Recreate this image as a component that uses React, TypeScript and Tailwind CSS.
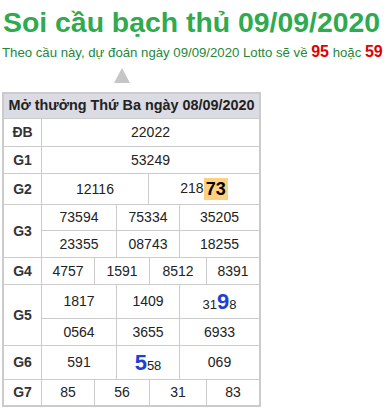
// Soi cau bach thu: prediction header + last draw result table

const W2 = ["w-[106px]", "w-[111px]"];
const W3 = ["w-[74px]", "w-[63px]", "w-[80px]"];
const W4 = ["w-[52px]", "w-[55px]", "w-[57px]", "w-[53px]"];

function Label({ children }: { children: React.ReactNode }) {
  return (
    <div className="w-[38px] shrink-0 border-r border-[#cccccc] flex items-center justify-center font-bold text-[#333]">
      {children}
    </div>
  );
}

function Cells({ widths, values, h }: { widths: string[]; values: React.ReactNode[]; h?: string }) {
  return (
    <div className={`flex ${h ?? "h-full"}`}>
      {values.map((v, i) => (
        <div
          key={i}
          className={`${widths[i]} flex items-center justify-center ${i > 0 ? "border-l border-[#cccccc]" : ""}`}
        >
          {v}
        </div>
      ))}
    </div>
  );
}

function Big({ children }: { children: React.ReactNode }) {
  return <span className="text-[22px] font-bold text-[#1d40d8]">{children}</span>;
}

function Small({ children }: { children: React.ReactNode }) {
  return <span className="text-[13px]">{children}</span>;
}

export default function App() {
  return (
    <div className="pl-[2px] font-['Liberation_Sans',Arial,sans-serif] bg-white min-h-[409px]">
      <h1 className="mt-[5px] text-[28.4px] leading-[34px] font-bold text-[#2eaa4f] pl-[1px]">
        Soi cầu bạch thủ 09/09/2020
      </h1>
      <p className="mt-[3px] text-[13.2px] leading-[20px] text-[#23883b]">
        Theo cầu này, dự đoán ngày 09/09/2020 Lotto sẽ về{" "}
        <span className="text-[16px] font-bold text-[#e00000]">95</span> hoặc{" "}
        <span className="text-[16px] font-bold text-[#e00000]">59</span>
      </p>

      <svg className="mt-[5px] ml-[112px] block" width="16" height="15" viewBox="0 0 16 15">
        <polygon points="8,0 16,15 0,15" fill="#c6c6c6" />
      </svg>

      <div className="mt-[9px] w-[259px] border-2 border-[#cbcbcb] text-[14px] text-[#222]">
        <div className="h-[24px] bg-[#dadbe3] flex items-center justify-center text-[14.4px] font-bold text-[#222]">
          Mở thưởng Thứ Ba ngày 08/09/2020
        </div>

        <div className="flex h-[28px] border-t border-[#cccccc]">
          <Label>ĐB</Label>
          <div className="flex-1 flex items-center justify-center">22022</div>
        </div>

        <div className="flex h-[27px] border-t border-[#cccccc]">
          <Label>G1</Label>
          <div className="flex-1 flex items-center justify-center">53249</div>
        </div>

        <div className="flex h-[31px] border-t border-[#cccccc]">
          <Label>G2</Label>
          <Cells
            widths={W2}
            values={[
              "12116",
              <span key="g2">
                218
                <span className="inline-block px-[2px] leading-[22px] text-[18px] font-bold text-black bg-[#ffd17f] align-middle">
                  73
                </span>
              </span>,
            ]}
          />
        </div>

        <div className="flex h-[53px] border-t border-[#cccccc]">
          <Label>G3</Label>
          <div className="flex flex-col">
            <Cells widths={W3} values={["73594", "75334", "35205"]} h="h-[25px]" />
            <div className="border-t border-[#cccccc]">
              <Cells widths={W3} values={["23355", "08743", "18255"]} h="h-[26px]" />
            </div>
          </div>
        </div>

        <div className="flex h-[27px] border-t border-[#cccccc]">
          <Label>G4</Label>
          <Cells widths={W4} values={["4757", "1591", "8512", "8391"]} />
        </div>

        <div className="flex h-[61px] border-t border-[#cccccc]">
          <Label>G5</Label>
          <div className="flex flex-col">
            <Cells
              widths={W3}
              values={[
                "1817",
                "1409",
                <span key="g5">
                  <Small>31</Small>
                  <Big>9</Big>
                  <Small>8</Small>
                </span>,
              ]}
              h="h-[33px]"
            />
            <div className="border-t border-[#cccccc]">
              <Cells widths={W3} values={["0564", "3655", "6933"]} h="h-[26px]" />
            </div>
          </div>
        </div>

        <div className="flex h-[34px] border-t border-[#cccccc]">
          <Label>G6</Label>
          <Cells
            widths={W3}
            values={[
              "591",
              <span key="g6">
                <Big>5</Big>
                <Small>58</Small>
              </span>,
              "069",
            ]}
          />
        </div>

        <div className="flex h-[26px] border-t border-[#cccccc]">
          <Label>G7</Label>
          <Cells widths={W4} values={["85", "56", "31", "83"]} />
        </div>
      </div>
    </div>
  );
}
